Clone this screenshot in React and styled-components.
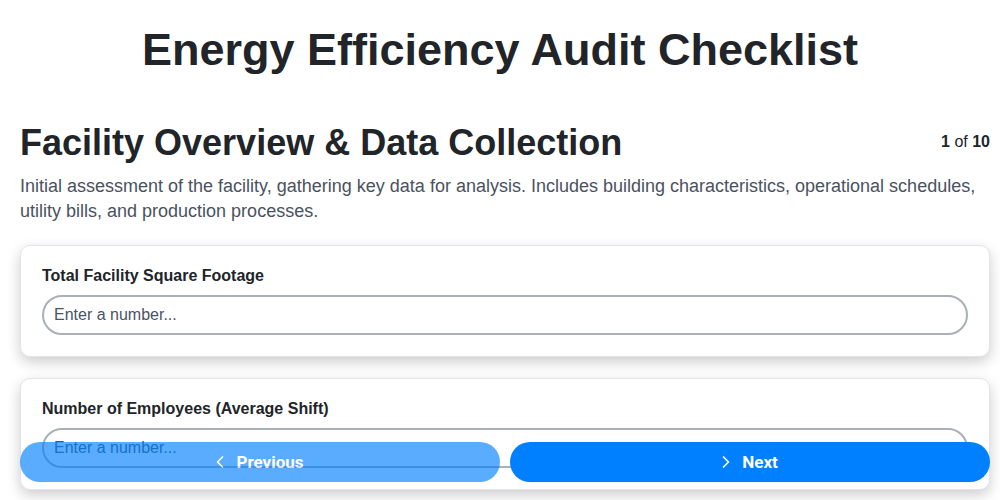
import React from 'react';
import styled, { createGlobalStyle } from 'styled-components';
import { ChevronLeft, ChevronRight } from 'lucide-react';

const GlobalStyle = createGlobalStyle`
  * { box-sizing: border-box; }
  body {
    margin: 0;
    background: #ffffff;
    font-family: "Liberation Sans", Arial, sans-serif;
    color: #212529;
  }
`;

const Title = styled.h1`
  margin: 24px 0 0;
  font-size: 45px;
  line-height: 52px;
  font-weight: 700;
  text-align: center;
  color: #212529;
`;

const Content = styled.main`
  padding: 0 10px 80px 20px;
`;

const SectionHeader = styled.div`
  display: flex;
  justify-content: space-between;
  align-items: center;
  margin-top: 46px;
`;

const SectionTitle = styled.h2`
  margin: 0;
  font-size: 36px;
  line-height: 42px;
  font-weight: 700;
  color: #212529;
`;

const Progress = styled.div`
  font-size: 16px;
  color: #212529;
  margin-top: -2px;

  strong { font-weight: 700; }
`;

const Description = styled.p`
  margin: 10px 0 21px;
  font-size: 18px;
  line-height: 25px;
  color: #4a5260;
`;

const Card = styled.div`
  background: #ffffff;
  border: 1px solid #e3e4ea;
  border-radius: 10px;
  padding: 20px 21px 21px;
  margin-bottom: 21px;
  box-shadow: 0 5px 14px rgba(0, 0, 0, 0.2);
`;

const Label = styled.label`
  display: block;
  font-size: 16px;
  line-height: 19px;
  font-weight: 700;
  color: #212529;
  margin-bottom: 10px;
`;

const Input = styled.input`
  display: block;
  width: 100%;
  height: 40px;
  padding: 0 10px;
  border: 2px solid #a9b0b8;
  border-radius: 20px;
  font-family: "Liberation Sans", Arial, sans-serif;
  font-size: 16px;
  color: #212529;
  background: #ffffff;
  outline: none;

  &::placeholder { color: #4b5363; }
`;

const NavBar = styled.div`
  position: fixed;
  left: 20px;
  right: 10px;
  bottom: 18px;
  display: grid;
  grid-template-columns: 1fr 1fr;
  gap: 10px;
`;

const NavButton = styled.button`
  height: 40px;
  padding: 0 6px 0 0;
  border: none;
  border-radius: 20px;
  background: #0080ff;
  color: #ffffff;
  opacity: ${p => (p.$dim ? 0.65 : 1)};
  display: flex;
  align-items: center;
  justify-content: center;
  gap: 6px;
  font-family: Roboto, "Liberation Sans", sans-serif;
  font-size: 17px;
  font-weight: 700;
  cursor: pointer;
`;

const fields = [
  'Total Facility Square Footage',
  'Number of Employees (Average Shift)',
];

const App = () => {
  return (
    <>
      <GlobalStyle />
      <Title>Energy Efficiency Audit Checklist</Title>
      <Content>
        <SectionHeader>
          <SectionTitle>Facility Overview &amp; Data Collection</SectionTitle>
          <Progress><strong>1</strong> of <strong>10</strong></Progress>
        </SectionHeader>
        <Description>
          Initial assessment of the facility, gathering key data for analysis. Includes building characteristics, operational schedules, utility bills, and production processes.
        </Description>
        {fields.map(f => (
          <Card key={f}>
            <Label>{f}</Label>
            <Input type="number" placeholder="Enter a number..." />
          </Card>
        ))}
      </Content>
      <NavBar>
        <NavButton $dim>
          <ChevronLeft size={20} strokeWidth={2} />
          Previous
        </NavButton>
        <NavButton>
          <ChevronRight size={20} strokeWidth={2} />
          Next
        </NavButton>
      </NavBar>
    </>
  );
};

export default App;
